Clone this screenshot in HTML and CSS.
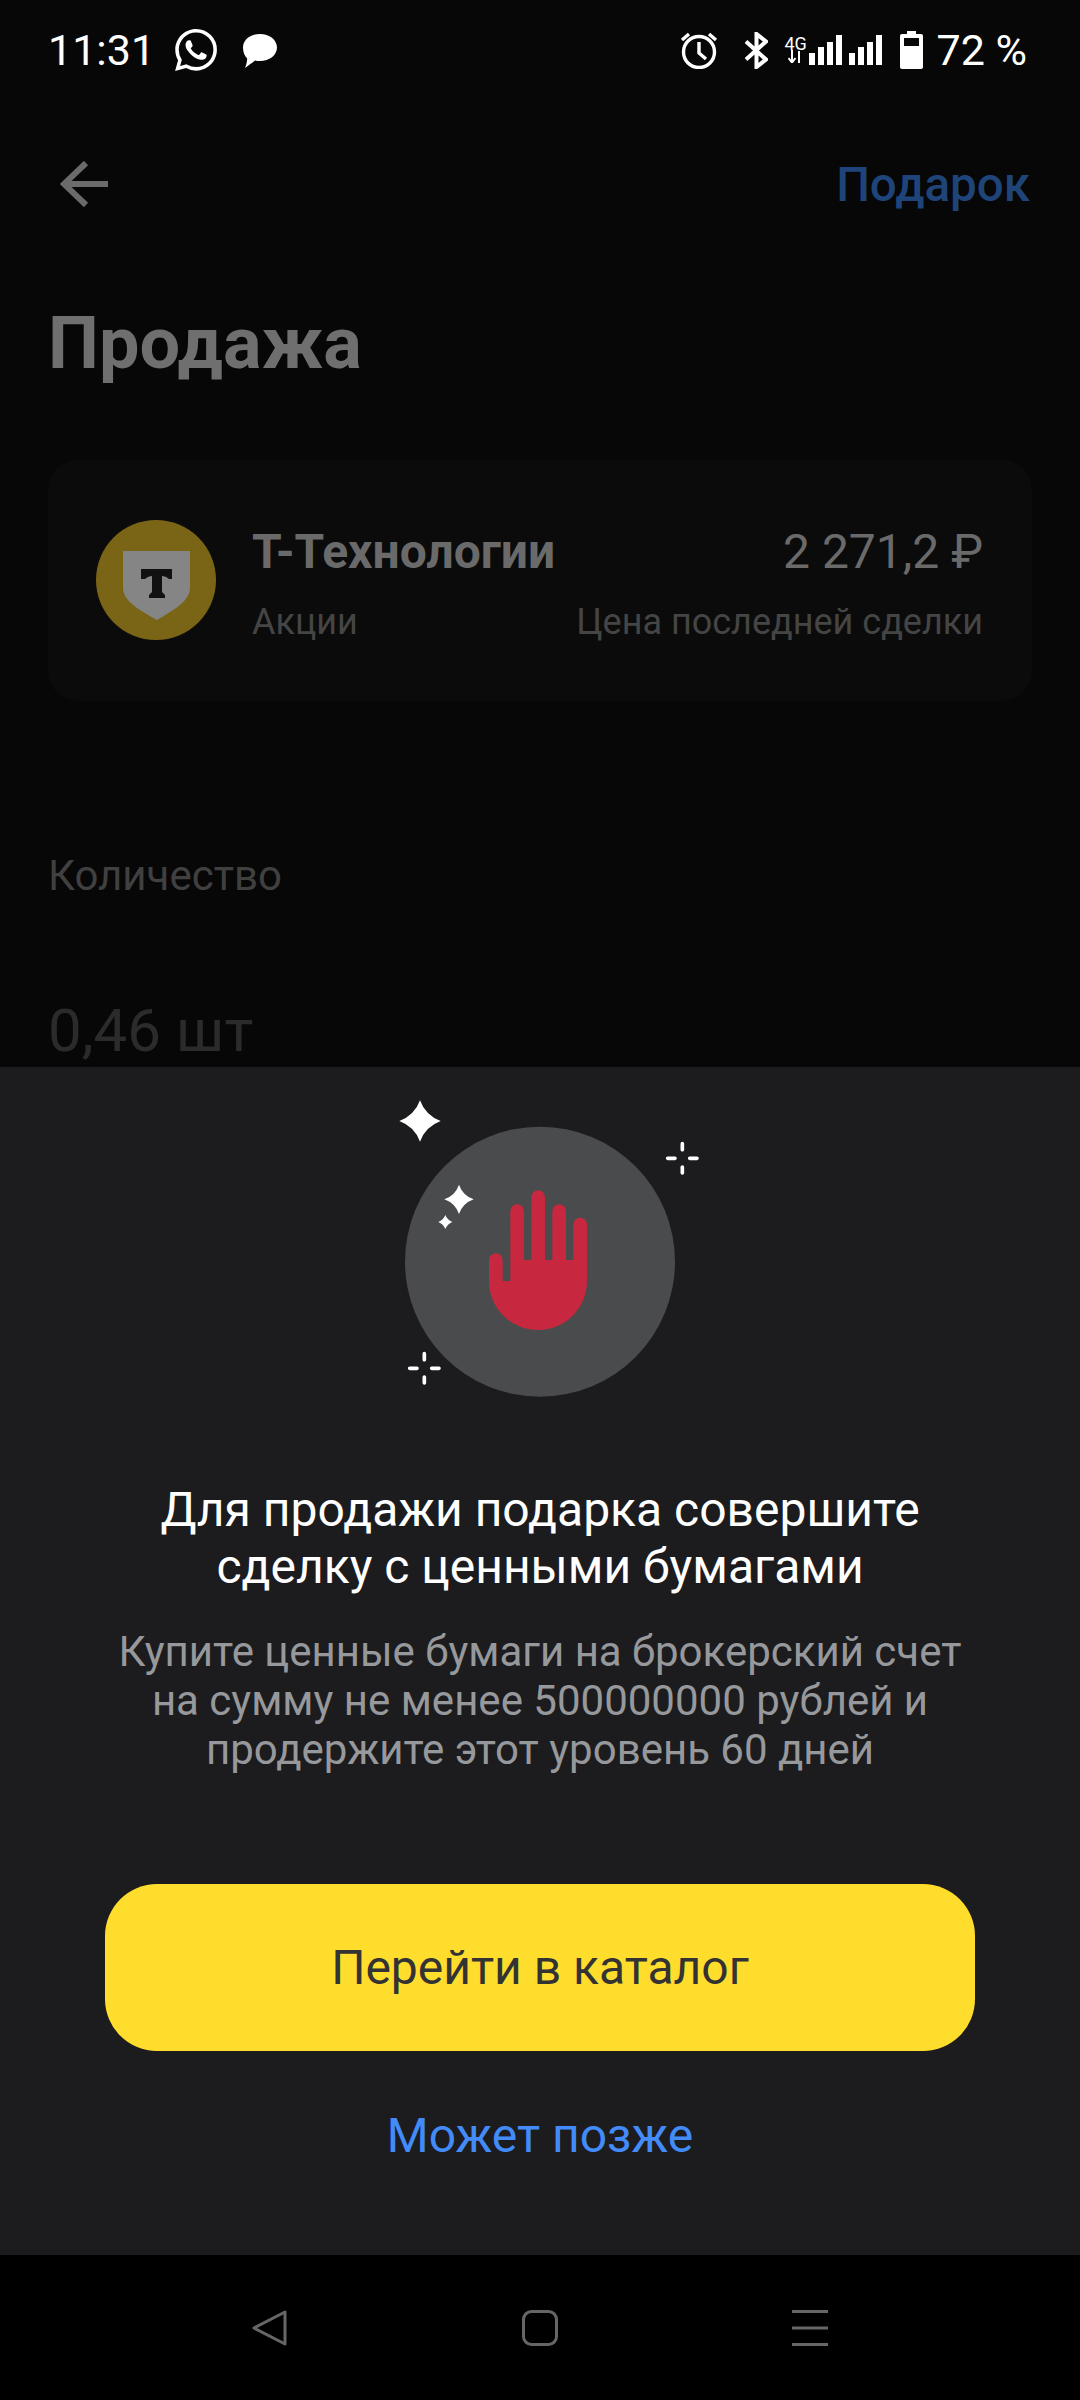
FILE: index.html
```html
<!DOCTYPE html>
<html lang="ru">
<head>
    <meta charset="UTF-8">
    <meta name="viewport" content="width=device-width, initial-scale=1.0">
    <title>Продажа</title>
    <link rel="stylesheet" href="styles.css">
</head>
<body>
    <div class="screen">
        <div class="backdrop">
            <div class="status-bar">
                <div class="status-group">
                    <span class="status-time">11:31</span>
                    <svg class="icon-whatsapp" viewBox="0 0 24 24"><path fill="#fff" d="M17.472 14.382c-.297-.149-1.758-.867-2.03-.967-.273-.099-.471-.148-.67.15-.197.297-.767.966-.94 1.164-.173.199-.347.223-.644.075-.297-.15-1.255-.463-2.39-1.475-.883-.788-1.48-1.761-1.653-2.059-.173-.297-.018-.458.13-.606.134-.133.298-.347.446-.52.149-.174.198-.298.298-.497.099-.198.05-.371-.025-.52-.075-.149-.669-1.612-.916-2.207-.242-.579-.487-.5-.669-.51-.173-.008-.371-.01-.57-.01-.198 0-.52.074-.792.372-.272.297-1.04 1.016-1.04 2.479 0 1.462 1.065 2.875 1.213 3.074.149.198 2.096 3.2 5.077 4.487.709.306 1.262.489 1.694.625.712.227 1.36.195 1.871.118.571-.085 1.758-.719 2.006-1.413.248-.694.248-1.289.173-1.413-.074-.124-.272-.198-.57-.347m-5.421 7.403h-.004a9.87 9.87 0 01-5.031-1.378l-.361-.214-3.741.982.998-3.648-.235-.374a9.86 9.86 0 01-1.51-5.26c.001-5.45 4.436-9.884 9.888-9.884 2.64 0 5.122 1.03 6.988 2.898a9.825 9.825 0 012.893 6.994c-.003 5.45-4.437 9.884-9.885 9.884m8.413-18.297A11.815 11.815 0 0012.05 0C5.495 0 .16 5.335.157 11.892c0 2.096.547 4.142 1.588 5.945L.057 24l6.305-1.654a11.882 11.882 0 005.683 1.448h.005c6.554 0 11.89-5.335 11.893-11.893a11.821 11.821 0 00-3.48-8.413Z"/></svg>
                    <svg class="icon-message" viewBox="0 0 34 36"><path fill="#fff" d="M17 2c9.400 0 17 5.800 17 13.500S26.400 29 17 29c-1.800 0-3.500-.2-5-.6C9 31 5 33.500 2 36c1.200-3 2-6 2.200-9.500C1.500 24 0 20 0 15.500 0 7.800 7.600 2 17 2Z"/></svg>
                </div>
                <div class="status-group">
                    <svg class="icon-alarm" viewBox="0 0 38 38" fill="none" stroke="#fff" stroke-width="3.400"><circle cx="19" cy="21" r="15.500"/><path d="M19 11v11l7 6M2 9l7-6M36 9l-7-6"/></svg>
                    <svg class="icon-bluetooth" viewBox="0 0 24 37" fill="none" stroke="#fff" stroke-width="4"><path d="M2 9.500l20 18-9.500 7.500V2L22 9.500 2 27.500"/></svg>
                    <div class="net-type">
                        <span class="net-label">4G</span>
                        <svg class="icon-arrows" viewBox="0 0 14 13" fill="none" stroke="#fff" stroke-width="2"><path d="M4 0v12M0.500 8L4 12.500 7.500 8M11 13V1"/></svg>
                    </div>
                    <div class="signal">
                        <i class="bar bar-1"></i><i class="bar bar-2"></i><i class="bar bar-3"></i><i class="bar bar-4"></i>
                    </div>
                    <div class="signal signal-second">
                        <i class="bar bar-1"></i><i class="bar bar-2"></i><i class="bar bar-3"></i><i class="bar bar-4"></i>
                    </div>
                    <svg class="icon-battery" viewBox="0 0 23 38"><path fill="#fff" d="M7 0h9v3h5c1.200 0 2 .8 2 2v31c0 1.200-.8 2-2 2H2c-1.200 0-2-.8-2-2V5c0-1.200.8-2 2-2h5Z"/><rect x="4" y="7" width="15" height="8" fill="#070707"/></svg>
                    <span class="status-battery">72 %</span>
                </div>
            </div>

            <div class="top-bar">
                <svg class="icon-back" viewBox="0 0 48 46" fill="none" stroke="#6b6b6b" stroke-width="6"><path d="M48 23H4M26 2L4 23l22 21"/></svg>
                <span class="gift-link">Подарок</span>
            </div>

            <h1 class="page-title">Продажа</h1>

            <div class="asset-card">
                <svg class="asset-logo" viewBox="0 0 120 120">
                    <circle cx="60" cy="60" r="60" fill="#7a6516"/>
                    <path fill="#858585" d="M27 31h67v37c0 14-20 24-33 32C47 92 27 82 27 68Z"/>
                    <path fill="#111" d="M45 49h31v10h-3c-2-2-5-3-7-3v16l3 3v3H53v-3l3-3V56c-2 0-5 1-7 3h-4Z"/>
                </svg>
                <div class="asset-main">
                    <div class="asset-name">Т-Технологии</div>
                    <div class="asset-type">Акции</div>
                </div>
                <div class="asset-side">
                    <div class="asset-price">2 271,2 ₽</div>
                    <div class="asset-note">Цена последней сделки</div>
                </div>
            </div>

            <div class="qty-label">Количество</div>
            <div class="qty-value">0,46 шт</div>
        </div>

        <div class="sheet">
            <svg class="hero" viewBox="-30 0 1080 960">
                <circle cx="510" cy="545" r="405" fill="#4a4b4d"/>
                <path fill="#c8283f" d="M357 540a20.500 20.500 0 0 1 41 0v63h23V393a20.500 20.500 0 0 1 41 0v147h22V351a20.500 20.500 0 0 1 41 0v189h22V393a20.500 20.500 0 0 1 41 0v147h22V434a20.500 20.500 0 0 1 41 0v169a147 147 0 0 1-294 0Z"/>
                <g fill="#fff">
                    <path d="M150 61Q166 106 212 123 166 140 150 185 134 140 88 123 134 106 150 61Z"/>
                    <path d="M267 314Q278 346 311 358 278 370 267 402 256 370 223 358 256 346 267 314Z"/>
                    <path d="M226 405Q232 420 247 426 232 432 226 447 220 432 205 426 220 420 226 405Z"/>
                </g>
                <path stroke="#fff" stroke-width="11" stroke-linecap="round" d="M937 191v18M937 261v18M893 235h22M959 235h22M163 821v18M163 891v18M119 865h22M185 865h22"/>
            </svg>
            <h2 class="sheet-title">Для продажи подарка совершите<br>сделку с ценными бумагами</h2>
            <p class="sheet-text">Купите ценные бумаги на брокерский счет<br>на сумму не менее 500000000 рублей и<br>продержите этот уровень 60 дней</p>
            <button class="btn-catalog">Перейти в каталог</button>
            <div class="later-link">Может позже</div>
        </div>

        <div class="nav-bar">
            <svg class="nav-icon" viewBox="0 0 36 36" fill="none" stroke="#666" stroke-width="3" stroke-linejoin="round"><path d="M33 2v32L2 18Z"/></svg>
            <svg class="nav-icon" viewBox="0 0 36 36" fill="none" stroke="#666" stroke-width="3"><rect x="1.500" y="1.500" width="33" height="33" rx="8"/></svg>
            <svg class="nav-icon" viewBox="0 0 36 36" fill="#666"><rect width="36" height="3"/><rect y="16.500" width="36" height="3"/><rect y="33" width="36" height="3"/></svg>
        </div>
    </div>
</body>
</html>
```

FILE: styles.css
```css
* {
    box-sizing: border-box;
}
html, body {
    margin: 0;
    padding: 0;
    background-color: #000;
}
.screen {
    width: 1080px;
    height: 2400px;
    display: flex;
    flex-direction: column;
    overflow: hidden;
    font-family: Roboto, "Noto Sans", sans-serif;
}

/* dimmed page behind the sheet */
.backdrop {
    height: 1067px;
    overflow: hidden;
    background-color: #070707;
    padding: 0 48px;
}
.status-bar {
    height: 100px;
    display: flex;
    justify-content: space-between;
    align-items: center;
    margin-right: 5px;
}
.status-group {
    display: flex;
    align-items: center;
}
.status-time {
    color: #fff;
    font-size: 43px;
    line-height: 50px;
}
.icon-whatsapp {
    width: 42px;
    height: 42px;
    margin-left: 20px;
}
.icon-message {
    width: 34px;
    height: 36px;
    margin-left: 26px;
}
.icon-alarm {
    width: 38px;
    height: 38px;
}
.icon-bluetooth {
    width: 24px;
    height: 37px;
    margin-left: 26px;
}
.net-type {
    width: 22px;
    margin-left: 17px;
    display: flex;
    flex-direction: column;
    align-items: flex-start;
}
.net-label {
    color: #fff;
    font-size: 18px;
    line-height: 13px;
}
.icon-arrows {
    width: 14px;
    height: 13px;
    margin-left: 3px;
}
.signal {
    height: 30px;
    margin-left: 2px;
    display: flex;
    align-items: flex-end;
    gap: 3px;
}
.signal-second {
    margin-left: 7px;
}
.bar {
    display: block;
    width: 6px;
    background-color: #fff;
}
.bar-1 { height: 12px; }
.bar-2 { height: 18px; }
.bar-3 { height: 23px; }
.bar-4 { height: 30px; }
.icon-battery {
    width: 23px;
    height: 38px;
    margin-left: 18px;
}
.status-battery {
    color: #fff;
    font-size: 43px;
    line-height: 50px;
    margin-left: 14px;
}

.top-bar {
    height: 168px;
    display: flex;
    justify-content: space-between;
    align-items: center;
}
.icon-back {
    width: 48px;
    height: 46px;
    margin-left: 12px;
}
.gift-link {
    color: #1f4479;
    font-size: 47.500px;
    font-weight: 500;
    margin-right: 2px;
    padding-top: 2px;
}
.page-title {
    margin: 37px 0 0;
    color: #6f6f6f;
    font-size: 72px;
    line-height: 78px;
    font-weight: 700;
}
.asset-card {
    height: 241px;
    margin-top: 77px;
    padding: 0 49px 0 48px;
    display: flex;
    align-items: flex-start;
    background-color: #0b0b0b;
    border-radius: 30px;
}
.asset-logo {
    width: 120px;
    height: 120px;
    margin-top: 60px;
    flex: none;
}
.asset-main {
    margin-left: 36px;
    flex: 1;
}
.asset-side {
    text-align: right;
}
.asset-name, .asset-price {
    margin-top: 64px;
    font-size: 48px;
    line-height: 56px;
    color: #6a6a6a;
}
.asset-name {
    font-weight: 700;
}
.asset-type, .asset-note {
    margin-top: 22px;
    font-size: 36px;
    line-height: 40px;
    color: #454545;
}
.qty-label {
    margin-top: 151px;
    font-size: 42px;
    line-height: 48px;
    color: #404040;
}
.qty-value {
    margin-top: 98px;
    font-size: 60px;
    line-height: 66px;
    color: #2b2b2b;
}

/* bottom sheet */
.sheet {
    height: 1188px;
    background-color: #1c1c1e;
    display: flex;
    flex-direction: column;
    align-items: center;
    padding-top: 13px;
}
.hero {
    width: 360px;
    height: 320px;
    flex: none;
}
.sheet-title {
    margin: 81px 0 0;
    color: #fff;
    font-size: 48px;
    line-height: 57px;
    font-weight: 400;
    text-align: center;
}
.sheet-text {
    margin: 32px 0 0;
    color: #97989c;
    font-size: 42px;
    line-height: 49px;
    text-align: center;
}
.btn-catalog {
    width: 870px;
    height: 167px;
    margin-top: 110px;
    flex: none;
    border: none;
    border-radius: 52px;
    background-color: #ffdd2d;
    color: #333;
    font-family: inherit;
    font-size: 48px;
}
.later-link {
    margin-top: 58px;
    color: #428bf9;
    font-size: 48px;
    line-height: 54px;
}

.nav-bar {
    flex: 1;
    background-color: #000;
    display: flex;
    align-items: flex-start;
    justify-content: space-between;
    padding: 55px 252px 0 252px;
}
.nav-icon {
    width: 36px;
    height: 36px;
}
```
